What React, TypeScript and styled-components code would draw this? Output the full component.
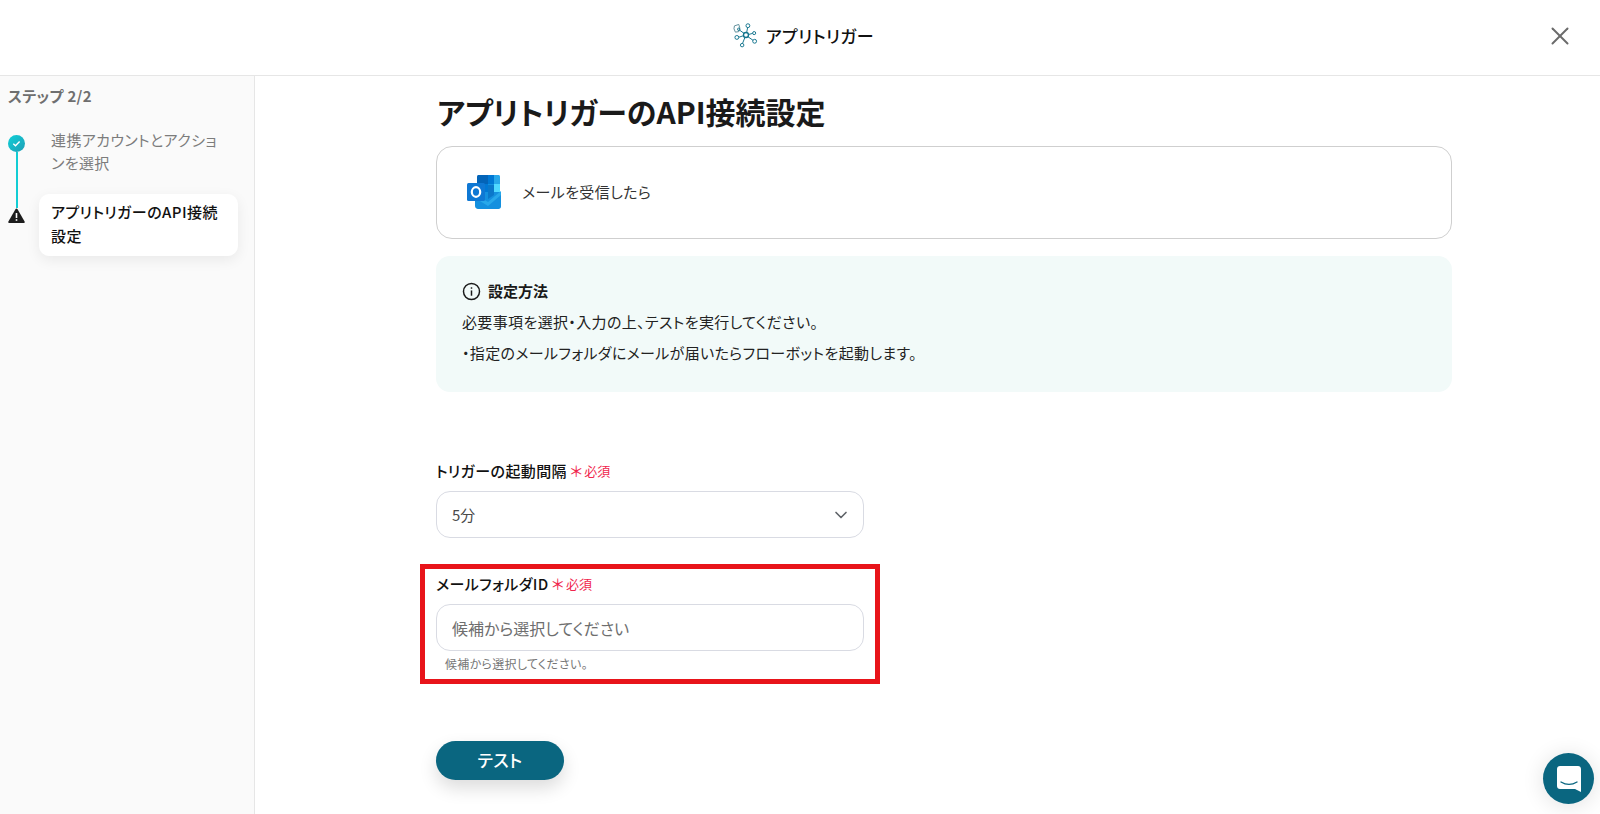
import React from 'react';
import styled, { createGlobalStyle } from 'styled-components';
import { X, ChevronDown } from 'lucide-react';

const GlobalStyle = createGlobalStyle`
    html, body {
        margin: 0;
        height: 100%;
        overflow: hidden;
        background: #fff;
    }

    body {
        font-family: 'Noto Sans CJK JP', 'Noto Sans', sans-serif;
        color: #1a1a1a;
    }

    * {
        box-sizing: border-box;
        font-feature-settings: 'palt';
    }
`;

const TriggerIcon = () => (
    <svg width="25" height="25" viewBox="0 0 26 26" fill="none" stroke="#12748c" strokeWidth="1">
        <path d="M1.5 3 L6 1.5 L7 5 L6 9 L2.5 9.5 L1 6 Z" stroke="#5d8d99" />
        <circle cx="13.5" cy="12.5" r="2.6" strokeWidth="1.4" />
        <circle cx="15.5" cy="2.8" r="2" />
        <circle cx="22" cy="10.5" r="1.6" />
        <circle cx="22.5" cy="19" r="2" />
        <circle cx="9.5" cy="23" r="1.8" />
        <circle cx="4" cy="15" r="2" />
        <circle cx="6" cy="6.5" r="1.3" />
        <path d="M14.2 10 L15.2 4.8 M16 12 L20.4 10.8 M15.6 14.3 L20.8 18 M12.4 15 L10 21 M11 13.2 L6 14.8 M11.5 10.8 L7 7.5" />
    </svg>
);

const OutlookIcon = () => (
    <svg width="35" height="34" viewBox="0 0 35 34">
        <path d="M10 1.5 C10 .7 10.7 0 11.5 0 H21 V9 H10 Z" fill="#0364b8" />
        <rect x="21" y="0" width="6" height="9" fill="#0078d4" />
        <path d="M27 0 H31.5 C32.3 0 33 .7 33 1.5 V9 H27 Z" fill="#28a8ea" />
        <rect x="10" y="9" width="11" height="9" fill="#0078d4" />
        <rect x="21" y="9" width="6" height="9" fill="#1490df" />
        <rect x="27" y="9" width="6" height="9" fill="#50d9ff" />
        <path d="M8 17 H34 V31.5 C34 32.9 32.9 34 31.5 34 H11 C9.4 34 8 32.6 8 31 Z" fill="#1490df" />
        <path d="M21 10 H27 V20 L21 24 Z" fill="#0364b8" opacity=".55" />
        <path d="M8 19 L21 27 L34 16 V20 L21 31 L8 23 Z" fill="#28a8ea" />
        <rect x="0" y="8" width="18" height="18" rx="1.5" fill="#0f78d4" />
        <ellipse cx="9" cy="17" rx="4.2" ry="4.8" fill="none" stroke="#fff" strokeWidth="2.2" />
    </svg>
);

const CheckBadge = () => (
    <svg width="17" height="17" viewBox="0 0 17 17">
        <defs>
            <linearGradient id="check-fill" x1="0" y1="0" x2="1" y2="1">
                <stop offset="0" stopColor="#10d0d8" />
                <stop offset="1" stopColor="#1f9db5" />
            </linearGradient>
        </defs>
        <circle cx="8.5" cy="8.5" r="8.5" fill="url(#check-fill)" />
        <path d="M5.3 8.8 L7.5 10.8 L11.6 6.6" fill="none" stroke="#fff" strokeWidth="1.4" />
    </svg>
);

const WarningBadge = () => (
    <svg width="17" height="15" viewBox="0 0 17 15">
        <path d="M8.5 .5 C8.9 .5 9.2 .7 9.4 1 L16.6 13.4 C17 14.1 16.5 15 15.7 15 H1.3 C.5 15 0 14.1 .4 13.4 L7.6 1 C7.8 .7 8.1 .5 8.5 .5 Z" fill="#1d1d1d" />
        <rect x="7.7" y="5" width="1.6" height="5" fill="#fff" />
        <rect x="7.7" y="11.2" width="1.6" height="1.6" fill="#fff" />
    </svg>
);

const InfoIcon = () => (
    <svg width="19" height="19" viewBox="0 0 18 18" fill="none" stroke="#1a1a1a" strokeWidth="1.4">
        <circle cx="9" cy="9" r="7.6" />
        <path d="M9 8 V13" />
        <path d="M9 5 V6.4" />
    </svg>
);

const ChatIcon = () => (
    <svg width="24" height="26" viewBox="0 0 24 26">
        <path d="M3 0 H21 C22.7 0 24 1.3 24 3 V26 L18 23 H3 C1.3 23 0 21.7 0 20 V3 C0 1.3 1.3 0 3 0 Z" fill="#fff" />
        <path d="M4 16 C9 19 15 19 20 16" fill="none" stroke="#0a6680" strokeWidth="1.4" strokeLinecap="round" />
    </svg>
);

const App = () => {
    return (
        <Page>
            <GlobalStyle />
            <Header>
                <Brand>
                    <TriggerIcon />
                    <BrandName>アプリトリガー</BrandName>
                </Brand>
                <CloseButton>
                    <X size={30} strokeWidth={1.6} />
                </CloseButton>
            </Header>
            <Body>
                <Sidebar>
                    <StepCount>ステップ 2/2</StepCount>
                    <Steps>
                        <Step>
                            <FirstMarker>
                                <CheckBadge />
                                <MarkerLine />
                            </FirstMarker>
                            <StepLabel>連携アカウントとアクションを選択</StepLabel>
                        </Step>
                        <Step>
                            <Marker>
                                <LastMarkerLine />
                                <WarningBadge />
                            </Marker>
                            <ActiveStepLabel>アプリトリガーのAPI接続設定</ActiveStepLabel>
                        </Step>
                    </Steps>
                </Sidebar>
                <Main>
                    <Title>アプリトリガーのAPI接続設定</Title>
                    <ActionCard>
                        <OutlookIcon />
                        <ActionName>メールを受信したら</ActionName>
                    </ActionCard>
                    <InfoBox>
                        <InfoHeading>
                            <InfoIcon />
                            設定方法
                        </InfoHeading>
                        <InfoText>必要事項を選択・入力の上、テストを実行してください。</InfoText>
                        <InfoText>・指定のメールフォルダにメールが届いたらフローボットを起動します。</InfoText>
                    </InfoBox>
                    <Field>
                        <Label>
                            トリガーの起動間隔<Required><Star>＊</Star>必須</Required>
                        </Label>
                        <SelectBox>
                            5分
                            <ChevronDown size={20} strokeWidth={2} color="#5f6368" />
                        </SelectBox>
                    </Field>
                    <HighlightedField>
                        <Label>
                            メールフォルダID<Required><Star>＊</Star>必須</Required>
                        </Label>
                        <TextInput placeholder="候補から選択してください" />
                        <Hint>候補から選択してください。</Hint>
                    </HighlightedField>
                    <TestButton>テスト</TestButton>
                </Main>
            </Body>
            <ChatBubble>
                <ChatIcon />
            </ChatBubble>
        </Page>
    );
};

const Page = styled.div`
    height: 814px;
    display: flex;
    flex-direction: column;
    overflow: hidden;
`;

const Header = styled.header`
    height: 76px;
    flex: none;
    display: flex;
    align-items: center;
    justify-content: center;
    position: relative;
    border-bottom: 1px solid #e6e6e6;
    padding: 0 0 4px 7px;
`;

const Brand = styled.div`
    display: flex;
    align-items: center;
    gap: 8px;
`;

const BrandName = styled.span`
    font-size: 17px;
    font-weight: 500;
    letter-spacing: 0.4px;
    color: #111;
`;

const CloseButton = styled.div`
    position: absolute;
    right: 25px;
    top: 21px;
    display: flex;
    color: #6b6b6b;
`;

const Body = styled.div`
    flex: 1;
    display: flex;
    min-height: 0;
`;

const Sidebar = styled.aside`
    width: 255px;
    flex: none;
    background: #fafafa;
    border-right: 1px solid #e6e6e6;
    padding: 11px 16px 0 8px;
`;

const StepCount = styled.div`
    font-size: 15px;
    font-weight: 700;
    line-height: 18px;
    letter-spacing: 0.3px;
    color: #6f6f6f;
`;

const Steps = styled.div`
    margin-top: 23px;
    display: flex;
    flex-direction: column;
`;

const Step = styled.div`
    display: flex;
    gap: 14px;
`;

const Marker = styled.div`
    width: 17px;
    flex: none;
    display: flex;
    flex-direction: column;
    align-items: center;

    svg {
        flex: none;
    }
`;

const FirstMarker = styled(Marker)`
    padding-top: 7px;
`;

const MarkerLine = styled.div`
    flex: 1;
    width: 2px;
    background: #12cdd4;
`;

const LastMarkerLine = styled(MarkerLine)`
    flex: none;
    height: 14px;
`;

const StepLabel = styled.div`
    padding: 1px 14px 20px 12px;
    font-size: 15px;
    line-height: 22.5px;
    letter-spacing: 0.4px;
    color: #7c7c7c;
`;

const ActiveStepLabel = styled.div`
    width: 199px;
    height: 62px;
    padding: 6px 12px;
    font-size: 15px;
    font-weight: 500;
    line-height: 24px;
    letter-spacing: 0.45px;
    color: #111;
    background: #fff;
    border-radius: 10px;
    box-shadow: 0 4px 14px rgba(0, 0, 0, 0.07);
`;

const Main = styled.main`
    flex: 1;
    min-width: 0;
    padding: 0 148px 0 181px;
`;

const Title = styled.h1`
    margin: 14px 0 0 1px;
    font-size: 30px;
    font-weight: 700;
    line-height: 42px;
    color: #1a1a1a;
`;

const ActionCard = styled.div`
    margin-top: 14px;
    height: 93px;
    display: flex;
    align-items: center;
    gap: 20px;
    padding: 0 0 2px 30px;
    border: 1px solid #cfcfcf;
    border-radius: 16px;
`;

const ActionName = styled.span`
    font-size: 15px;
    letter-spacing: 0.4px;
    color: #333;
`;

const InfoBox = styled.section`
    margin-top: 17px;
    height: 136px;
    padding: 23px 26px;
    background: #f2faf9;
    border-radius: 14px;
`;

const InfoHeading = styled.div`
    display: flex;
    align-items: center;
    gap: 7px;
    font-size: 15px;
    font-weight: 700;
    line-height: 24px;
    margin-bottom: 7px;
`;

const InfoText = styled.p`
    margin: 0 0 7px;
    font-size: 15px;
    line-height: 24px;
    letter-spacing: 0.36px;
    color: #222;
`;

const Field = styled.div`
    margin-top: 67px;
    width: 428px;
`;

const HighlightedField = styled.div`
    margin: 26px 0 0 -16px;
    width: 460px;
    height: 120px;
    padding: 3px 11px 0;
    border: 5px solid #e8141a;
`;

const Label = styled.div`
    font-size: 15px;
    font-weight: 500;
    line-height: 24px;
    letter-spacing: 0.4px;
    color: #111;
    display: flex;
    align-items: center;
`;

const Required = styled.span`
    margin-left: 3px;
    font-size: 13px;
    font-weight: 400;
    letter-spacing: 0;
    color: #f0264d;
    display: flex;
    align-items: center;
`;

const Star = styled.span`
    font-size: 15px;
    line-height: 14px;
    margin-right: 2px;
`;

const SelectBox = styled.div`
    margin-top: 8px;
    height: 47px;
    display: flex;
    align-items: center;
    justify-content: space-between;
    padding: 0 12px 0 15px;
    font-size: 15px;
    color: #4a4a4a;
    border: 1px solid #d9dbe3;
    border-radius: 14px;
`;

const TextInput = styled.input`
    display: block;
    margin-top: 8px;
    width: 428px;
    height: 47px;
    padding: 0 15px;
    font-family: inherit;
    font-size: 16px;
    border: 1px solid #d9dbe3;
    border-radius: 14px;
    outline: none;

    &::placeholder {
        color: #6e6e6e;
        opacity: 1;
    }
`;

const Hint = styled.div`
    margin: 5px 0 0 9px;
    font-size: 12px;
    line-height: 16px;
    letter-spacing: 0.3px;
    color: #777;
`;

const TestButton = styled.button`
    display: block;
    margin-top: 57px;
    width: 128px;
    height: 39px;
    padding: 0 0 2px;
    border: none;
    border-radius: 20px;
    background: #0a6680;
    color: #fff;
    font-family: inherit;
    font-size: 17px;
    font-weight: 500;
    letter-spacing: 0.5px;
    box-shadow: 0 8px 18px rgba(0, 0, 0, 0.14);
`;

const ChatBubble = styled.div`
    position: fixed;
    right: 6px;
    bottom: 10px;
    width: 51px;
    height: 51px;
    border-radius: 50%;
    background: #0a6680;
    display: flex;
    align-items: center;
    justify-content: center;
    box-shadow: 0 2px 22px rgba(0, 0, 0, 0.12);
`;

export default App;
